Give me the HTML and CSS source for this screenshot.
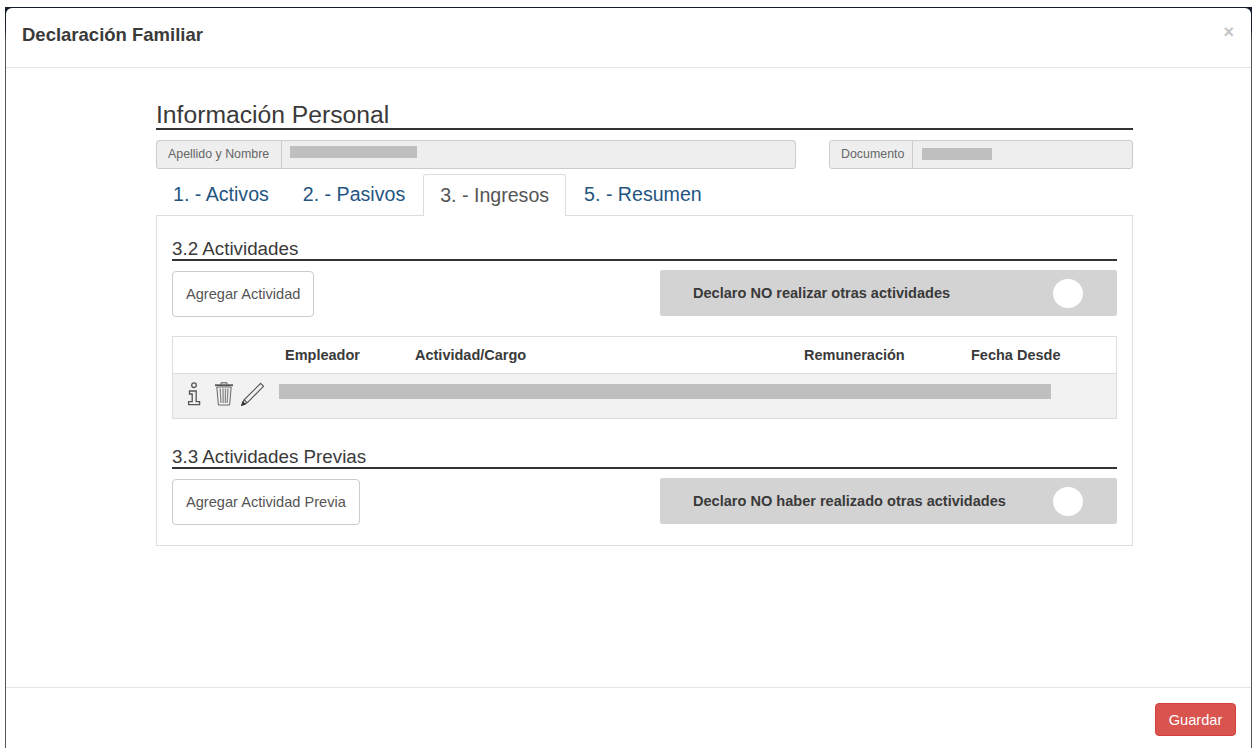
FILE: index.html
```html
<!DOCTYPE html>
<html lang="es">
<head>
<meta charset="utf-8">
<title>Declaración Familiar</title>
<link rel="stylesheet" href="styles.css">
</head>
<body>
<div class="backdrop">
  <div class="modal">
    <header class="modal-header">
      <h4 class="modal-title">Declaración Familiar</h4>
      <span class="close">×</span>
    </header>
    <main class="modal-body">
      <h3 class="page-heading">Información Personal</h3>
      <div class="person-row">
        <div class="input-group name-group">
          <span class="addon">Apellido y Nombre</span>
          <span class="field"><span class="mask mask-name"></span></span>
        </div>
        <div class="input-group doc-group">
          <span class="addon">Documento</span>
          <span class="field"><span class="mask mask-doc"></span></span>
        </div>
      </div>
      <nav class="tabs">
        <a class="tab">1. - Activos</a>
        <a class="tab">2. - Pasivos</a>
        <a class="tab active">3. - Ingresos</a>
        <a class="tab">5. - Resumen</a>
      </nav>
      <section class="tab-panel">
        <h4 class="section-heading">3.2 Actividades</h4>
        <div class="action-row">
          <button class="btn-outline">Agregar Actividad</button>
          <div class="declare">
            <span>Declaro NO realizar otras actividades</span>
            <span class="knob"></span>
          </div>
        </div>
        <div class="table">
          <div class="table-head">
            <span>Empleador</span>
            <span>Actividad/Cargo</span>
            <span>Remuneración</span>
            <span>Fecha Desde</span>
          </div>
          <div class="table-row">
            <div class="row-icons">
              <!-- info -->
              <svg class="icon" width="22" height="24" viewBox="0 0 22 24" fill="none" stroke="#555" stroke-width="1.3">
                <circle cx="9" cy="3.2" r="2.3"/>
                <path d="M4.5 9h6.7v10.6h3.4v3H3.6v-3h3.6v-7.6H4.5z"/>
              </svg>
              <!-- trash -->
              <svg class="icon" width="20" height="24" viewBox="0 0 20 24" fill="none" stroke="#666" stroke-width="1">
                <path d="M7 2.5V.8h6v1.7" stroke="#555"/>
                <path d="M1 3.2h18" stroke="#555" stroke-width="1.8"/>
                <path d="M2.8 5l1.6 18h11.2l1.6-18z"/>
                <path d="M6.2 6.5l.7 14.5M9 6.5l.2 14.5M11.5 6.5l-.2 14.5M14 6.5l-.8 14.5" stroke="#888" stroke-width="1.3"/>
              </svg>
              <!-- pencil -->
              <svg class="icon" width="24" height="24" viewBox="0 0 24 24" fill="none" stroke="#555" stroke-width="1.2">
                <path d="M19.6 1.4l2.9 2.9L6.2 20.8 1 23l2.1-5.1z"/>
                <path d="M3.1 17.9l3.1 2.9"/>
                <path d="M1 23l.9-2.9 2 2z" fill="#333" stroke="#333"/>
              </svg>
            </div>
            <span class="mask mask-row"></span>
          </div>
        </div>
        <h4 class="section-heading second">3.3 Actividades Previas</h4>
        <div class="action-row">
          <button class="btn-outline">Agregar Actividad Previa</button>
          <div class="declare">
            <span>Declaro NO haber realizado otras actividades</span>
            <span class="knob"></span>
          </div>
        </div>
      </section>
    </main>
    <footer class="modal-footer">
      <button class="btn-danger">Guardar</button>
    </footer>
  </div>
</div>
</body>
</html>
```
FILE: styles.css
```css
* { box-sizing: border-box; }

html, body {
  margin: 0;
  height: 100%;
  background: #fff;
  overflow: hidden;
}

body {
  font-family: "Liberation Sans", Arial, sans-serif;
  color: #333;
  padding: 7px 1px 0 5px;
}

.backdrop {
  height: 741px;
  padding: 1px 1px 0 1px;
  background: linear-gradient(#141c2e 0, #141c2e 22px, #555 34px);
}

.modal {
  height: 740px;
  background: #fff;
  border-radius: 6px 6px 0 0;
  display: flex;
  flex-direction: column;
}

.modal-header {
  height: 60px;
  flex: none;
  border-bottom: 1px solid #e5e5e5;
  padding: 0 16px;
  display: flex;
  align-items: center;
  justify-content: space-between;
}

.modal-title {
  margin: 0 0 5px;
  font-size: 18.5px;
  font-weight: 700;
  line-height: 26px;
  color: #3a3a3a;
}

.close {
  font-size: 18px;
  font-weight: 700;
  line-height: 1;
  color: #c4c4c4;
  margin: 0 1px 12px 0;
}

.modal-body {
  flex: 1;
  padding: 32px 118px 0 150px;
}

.page-heading {
  margin: 0;
  height: 30px;
  font-size: 24.7px;
  font-weight: 400;
  line-height: 30px;
  color: #3a3a3a;
  border-bottom: 2px solid #333;
}

.person-row {
  display: flex;
  justify-content: space-between;
  margin-top: 10px;
}

.input-group {
  display: flex;
  height: 29px;
  background: #eee;
  border: 1px solid #ccc;
  border-radius: 3px;
  font-size: 12.4px;
  color: #666;
}

.name-group { width: 640px; }
.doc-group { width: 304px; }

.addon {
  display: flex;
  align-items: center;
  padding: 0 0 2px 11px;
  border-right: 1px solid #ccc;
  white-space: nowrap;
}

.name-group .addon { width: 125px; }
.doc-group .addon { width: 83px; }

.field {
  flex: 1;
  padding: 5px 0 0 8px;
}

.mask {
  display: block;
  background: #bfbfbf;
}

.mask-name { width: 127px; height: 12px; }
.mask-doc { width: 70px; height: 12px; margin: 2px 0 0 1px; }

.tabs {
  display: flex;
  height: 41px;
  margin-top: 5px;
}

.tab {
  height: 41px;
  padding: 8px 16px 0 16px;
  font-size: 19.6px;
  line-height: 22px;
  color: #245580;
  white-space: nowrap;
  border: 1px solid transparent;
  border-bottom: 0;
}

.tab.active {
  position: relative;
  z-index: 1;
  height: 42px;
  margin: 0 1px;
  color: #555;
  background: #fff;
  border-color: #ddd;
  border-radius: 3px 3px 0 0;
  padding-top: 9px;
}

.tab-panel {
  height: 331px;
  border: 1px solid #ddd;
  padding: 0 15px;
}

.section-heading {
  margin: 0;
  box-sizing: content-box;
  height: 17px;
  padding: 24px 0 2px;
  font-size: 18.8px;
  font-weight: 400;
  line-height: 17px;
  border-bottom: 2px solid #333;
  color: #3a3a3a;
}

.section-heading.second {
  margin-top: 29px;
  padding-top: 0;
}

.action-row {
  display: flex;
  justify-content: space-between;
  margin-top: 9px;
  height: 47px;
}

.btn-outline {
  margin-top: 1px;
  height: 46px;
  padding: 0 13px;
  font: 14.6px "Liberation Sans", Arial, sans-serif;
  color: #555;
  background: #fff;
  border: 1px solid #ccc;
  border-radius: 4px;
}

.declare {
  width: 457px;
  height: 46px;
  background: #d3d3d3;
  border-radius: 2px;
  padding: 0 34px 0 33px;
  display: flex;
  align-items: center;
  justify-content: space-between;
  font-size: 14.55px;
  font-weight: 700;
  color: #3a3a3a;
}

.knob {
  width: 30px;
  height: 29px;
  border-radius: 50%;
  background: #fff;
}

.table {
  margin-top: 19px;
  border: 1px solid #ddd;
}

.table-head {
  height: 37px;
  border-bottom: 1px solid #ddd;
  display: grid;
  grid-template-columns: 130px 389px 167px 1fr;
  padding-left: 112px;
  align-items: center;
  font-size: 14.5px;
  font-weight: 700;
  color: #3a3a3a;
}

.table-row {
  height: 44px;
  background: #f2f2f2;
  display: flex;
  align-items: center;
  padding-left: 12px;
}

.row-icons {
  display: flex;
  gap: 7px;
  align-items: center;
  width: 94px;
  flex: none;
  margin-top: -5px;
}

.icon { display: block; flex: none; }

.mask-row {
  width: 772px;
  height: 15px;
  margin-top: -9px;
}

.modal-footer {
  height: 61px;
  flex: none;
  border-top: 1px solid #e5e5e5;
  display: flex;
  justify-content: flex-end;
  padding: 15px 15px 0 0;
}

.btn-danger {
  width: 81px;
  height: 33px;
  padding: 0;
  font: 14.6px "Liberation Sans", Arial, sans-serif;
  color: #fff;
  background: #d9534f;
  border: 1px solid #d43f3a;
  border-radius: 4px;
}
```
